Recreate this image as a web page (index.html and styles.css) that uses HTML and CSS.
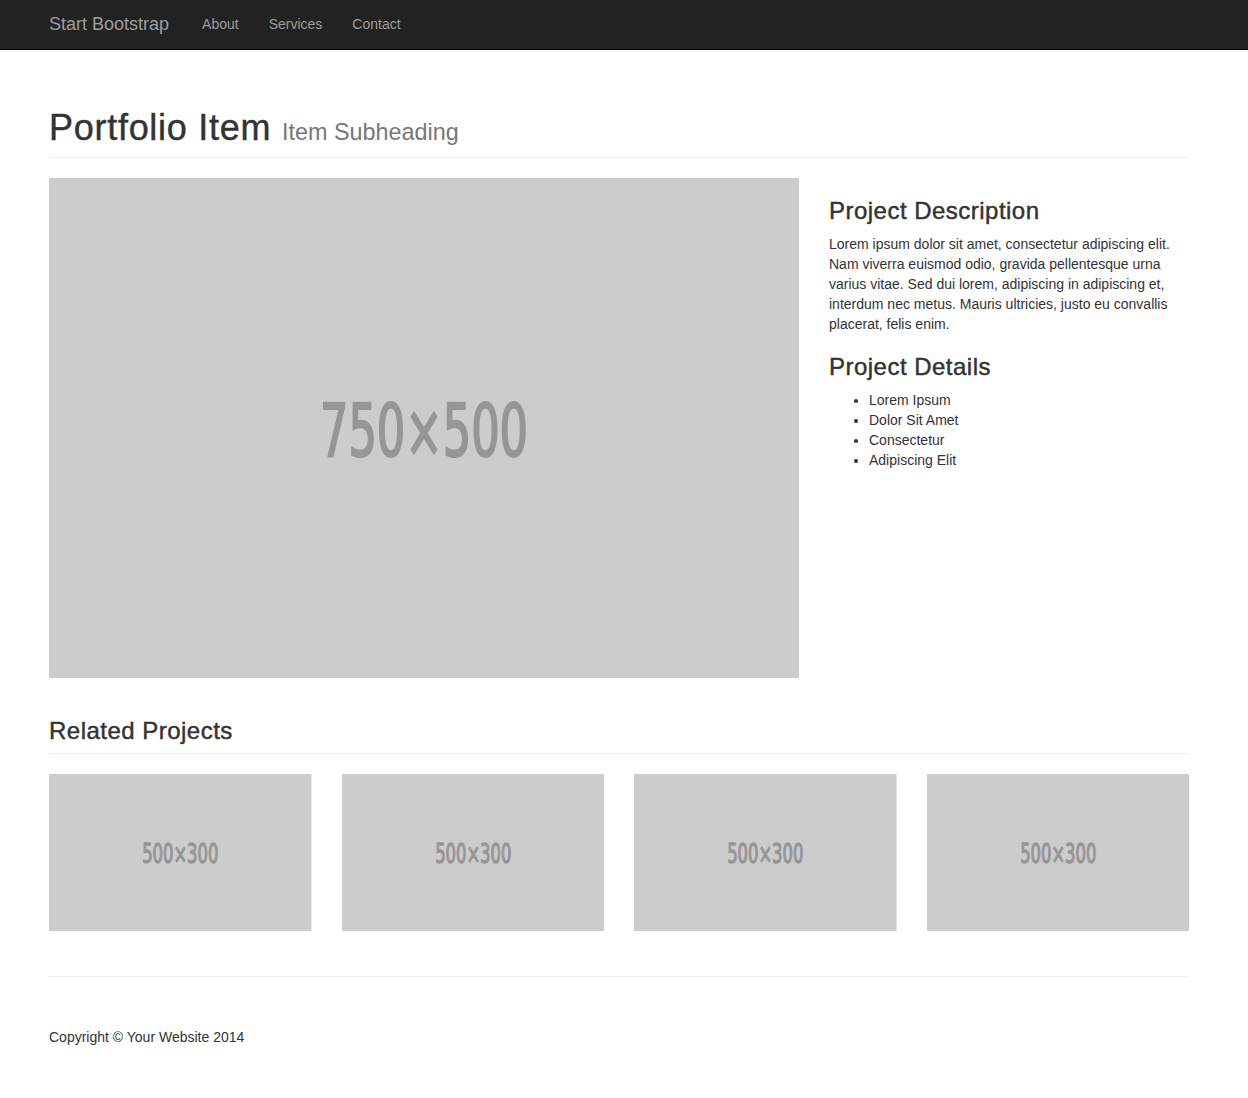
FILE: index.html
```html
<!DOCTYPE html>
<html lang="en">
<head>
<meta charset="utf-8">
<title>Portfolio Item - Start Bootstrap</title>
<link rel="stylesheet" href="styles.css">
</head>
<body>
<nav class="navbar">
  <div class="nav-inner">
    <a class="brand" href="#">Start Bootstrap</a>
    <ul class="nav-links">
      <li><a href="#">About</a></li>
      <li><a href="#">Services</a></li>
      <li><a href="#">Contact</a></li>
    </ul>
  </div>
</nav>

<main class="container">
  <h1 class="page-header">Portfolio Item <small>Item Subheading</small></h1>

  <div class="item-row">
    <div class="item-image">
      <svg class="ph" viewBox="0 0 750 500" width="750" height="500">
        <rect width="750" height="500" fill="#cccccc"/>
        <text x="375" y="277.5" text-anchor="middle" textLength="208" lengthAdjust="spacingAndGlyphs" class="ph-text ph-big" font-size="73">750×500</text>
      </svg>
    </div>
    <div class="item-info">
      <h3>Project Description</h3>
      <p>Lorem ipsum dolor sit amet, consectetur adipiscing elit. Nam viverra euismod odio, gravida pellentesque urna varius vitae. Sed dui lorem, adipiscing in adipiscing et, interdum nec metus. Mauris ultricies, justo eu convallis placerat, felis enim.</p>
      <h3>Project Details</h3>
      <ul>
        <li>Lorem Ipsum</li>
        <li>Dolor Sit Amet</li>
        <li>Consectetur</li>
        <li>Adipiscing Elit</li>
      </ul>
    </div>
  </div>

  <h3 class="page-header related">Related Projects</h3>

  <div class="related-grid">
    <a href="#" class="thumb"><svg class="ph" viewBox="0 0 500 300"><rect width="500" height="300" fill="#cccccc"/><text x="250" y="169.5" text-anchor="middle" textLength="145" lengthAdjust="spacingAndGlyphs" class="ph-text ph-small" font-size="52">500×300</text></svg></a>
    <a href="#" class="thumb"><svg class="ph" viewBox="0 0 500 300"><rect width="500" height="300" fill="#cccccc"/><text x="250" y="169.5" text-anchor="middle" textLength="145" lengthAdjust="spacingAndGlyphs" class="ph-text ph-small" font-size="52">500×300</text></svg></a>
    <a href="#" class="thumb"><svg class="ph" viewBox="0 0 500 300"><rect width="500" height="300" fill="#cccccc"/><text x="250" y="169.5" text-anchor="middle" textLength="145" lengthAdjust="spacingAndGlyphs" class="ph-text ph-small" font-size="52">500×300</text></svg></a>
    <a href="#" class="thumb"><svg class="ph" viewBox="0 0 500 300"><rect width="500" height="300" fill="#cccccc"/><text x="250" y="169.5" text-anchor="middle" textLength="145" lengthAdjust="spacingAndGlyphs" class="ph-text ph-small" font-size="52">500×300</text></svg></a>
  </div>

  <hr class="rule">

  <footer class="footer">
    <p>Copyright © Your Website 2014</p>
  </footer>
</main>
</body>
</html>
```

FILE: styles.css
```css
* { box-sizing: border-box; }

html, body {
  margin: 0;
  padding: 0;
  background: #fff;
}

body {
  font-family: "Liberation Sans", Arial, sans-serif;
  font-size: 14px;
  line-height: 20px;
  color: #333;
}

a { text-decoration: none; }

.navbar {
  height: 50px;
  background: #222;
  border-bottom: 1px solid #080808;
}

.nav-inner {
  width: 1140px;
  margin-left: 49px;
  display: flex;
  align-items: center;
  height: 48px;
}

.brand {
  font-size: 18px;
  line-height: 20px;
  color: #9d9d9d;
  padding-right: 18px;
}

.nav-links {
  list-style: none;
  margin: 0;
  padding: 0;
  display: flex;
}

.nav-links a {
  display: block;
  padding: 0 15px;
  font-size: 14px;
  line-height: 20px;
  color: #9d9d9d;
}

.container {
  width: 1140px;
  margin-left: 49px;
}

h1, h3 {
  font-weight: 400;
  line-height: 1.1;
  color: #333;
  -webkit-text-stroke: 0.45px #333;
  letter-spacing: 0.02em;
}

.page-header {
  margin: 58px 0 20px;
  padding-bottom: 9px;
  border-bottom: 1px solid #eee;
}

h1.page-header {
  font-size: 36px;
}

.page-header small {
  font-size: 65%;
  font-weight: 400;
  color: #777;
  -webkit-text-stroke: 0;
  letter-spacing: 0;
}

.item-row {
  display: flex;
  gap: 30px;
}

.item-image {
  width: 750px;
  flex: none;
}

.ph {
  display: block;
  width: 100%;
  height: auto;
}

.ph-text {
  font-family: "DejaVu Sans Condensed", "DejaVu Sans", sans-serif;
  font-stretch: condensed;
  font-weight: 400;
  fill: #969696;
  stroke: #969696;
  stroke-linejoin: round;
}

.ph-big { stroke-width: 2.2px; }
.ph-small { stroke-width: 2.4px; }

.item-info {
  width: 360px;
}

.item-info h3 {
  font-size: 24px;
  margin: 20px 0 10px;
}

.item-info p {
  margin: 0 0 10px;
}

.item-info ul {
  margin: 0 0 10px;
  padding-left: 40px;
}

h3.related {
  font-size: 24px;
  margin: 40px 0 20px;
}

.related-grid {
  display: grid;
  grid-template-columns: repeat(4, 1fr);
  column-gap: 30px;
  margin-bottom: 45px;
}

.thumb {
  display: block;
}

.rule {
  margin: 0;
  border: 0;
  border-top: 1px solid #eee;
}

.footer {
  margin-top: 50px;
  padding-bottom: 40px;
}

.footer p {
  margin: 0;
}
```
